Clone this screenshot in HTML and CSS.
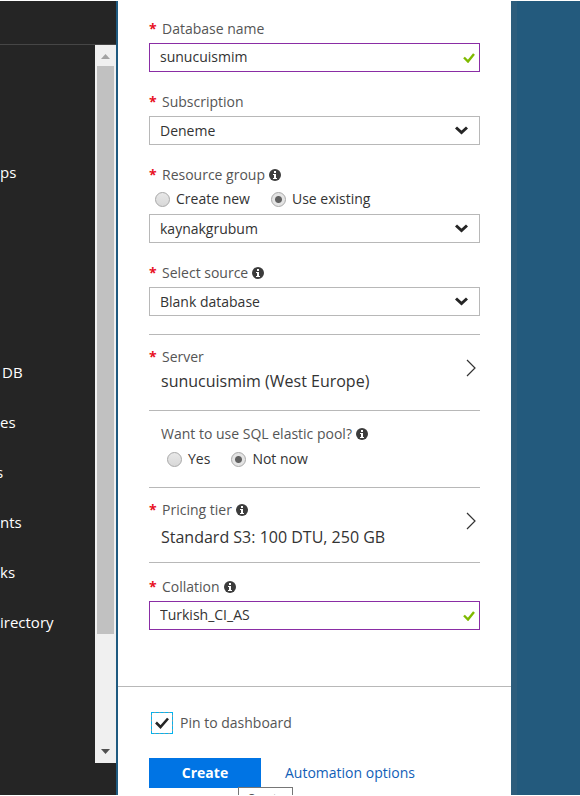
FILE: index.html
```html
<!DOCTYPE html>
<html lang="en">
<head>
    <meta charset="UTF-8">
    <meta name="viewport" content="width=device-width, initial-scale=1.0">
    <title>SQL Database</title>
    <link rel="stylesheet" href="styles.css">
</head>
<body>

<svg class="defs" width="0" height="0">
    <symbol id="info" viewBox="0 0 12 12">
        <circle cx="6" cy="6" r="6" fill="#3c3c3c"/>
        <path d="M5 2h2v2H5zM4 5h3v4h1v1H4V9h1V6H4z" fill="#fff"/>
    </symbol>
    <symbol id="valid" viewBox="0 0 12 10">
        <path d="M1 4.500l4 4 6-7.500" fill="none" stroke="#7fba00" stroke-width="2.400"/>
    </symbol>
    <symbol id="chevron" viewBox="0 0 13 9">
        <path d="M1 1.500l5.500 5 5.500-5" fill="none" stroke="#252525" stroke-width="3"/>
    </symbol>
    <symbol id="arrow" viewBox="0 0 10 18">
        <path d="M1 1l8 8-8 8" fill="none" stroke="#333" stroke-width="1.200"/>
    </symbol>
    <symbol id="tick" viewBox="0 0 14 12">
        <path d="M1 5.500l4.500 4.500L13 1.500" fill="none" stroke="#252525" stroke-width="2.600"/>
    </symbol>
</svg>

<div class="portal">
    <nav class="sidebar">
        <div class="sidebar-top"></div>
        <div class="sidebar-main">
            <ul class="menu">
                <li><a href="#">ps</a></li>
                <li class="menu-section"><a href="#" class="indent">DB</a></li>
                <li><a href="#">es</a></li>
                <li><a href="#" class="cut">s</a></li>
                <li><a href="#">nts</a></li>
                <li><a href="#">ks</a></li>
                <li><a href="#">irectory</a></li>
            </ul>
            <div class="scrollbar">
                <svg class="scroll-arrow" viewBox="0 0 21 21"><path d="M6 14l4.500-5 4.500 5z" fill="#a3a3a3"/></svg>
                <div class="track"><div class="thumb"></div></div>
                <svg class="scroll-arrow" viewBox="0 0 21 21"><path d="M6 7l4.500 5L15 7z" fill="#505050"/></svg>
            </div>
        </div>
    </nav>

    <form class="blade">
        <div class="fields">
            <div class="field">
                <label for="dbname"><span class="req">*</span>Database name</label>
                <div class="control">
                    <input type="text" id="dbname" value="sunucuismim">
                    <svg class="valid"><use href="#valid"/></svg>
                </div>
            </div>

            <div class="field">
                <label for="subscription"><span class="req">*</span>Subscription</label>
                <div class="control">
                    <select id="subscription"><option>Deneme</option></select>
                    <svg class="chevron"><use href="#chevron"/></svg>
                </div>
            </div>

            <div class="field">
                <label for="group"><span class="req">*</span>Resource group<svg class="info"><use href="#info"/></svg></label>
                <div class="radios">
                    <label><input type="radio" name="group-mode">Create new</label>
                    <label><input type="radio" name="group-mode" checked>Use existing</label>
                </div>
                <div class="control">
                    <select id="group"><option>kaynakgrubum</option></select>
                    <svg class="chevron"><use href="#chevron"/></svg>
                </div>
            </div>

            <div class="field">
                <label for="source"><span class="req">*</span>Select source<svg class="info"><use href="#info"/></svg></label>
                <div class="control">
                    <select id="source"><option>Blank database</option></select>
                    <svg class="chevron"><use href="#chevron"/></svg>
                </div>
            </div>

            <button type="button" class="picker">
                <span class="picker-label"><span class="req">*</span>Server</span>
                <span class="picker-value">sunucuismim (West Europe)</span>
                <svg class="arrow"><use href="#arrow"/></svg>
            </button>

            <div class="pool">
                <div class="pool-label">Want to use SQL elastic pool?<svg class="info"><use href="#info"/></svg></div>
                <div class="radios">
                    <label><input type="radio" name="pool">Yes</label>
                    <label><input type="radio" name="pool" checked>Not now</label>
                </div>
            </div>

            <button type="button" class="picker picker-last">
                <span class="picker-label"><span class="req">*</span>Pricing tier<svg class="info"><use href="#info"/></svg></span>
                <span class="picker-value">Standard S3: 100 DTU, 250 GB</span>
                <svg class="arrow"><use href="#arrow"/></svg>
            </button>

            <div class="field">
                <label for="collation"><span class="req">*</span>Collation<svg class="info"><use href="#info"/></svg></label>
                <div class="control">
                    <input type="text" id="collation" value="Turkish_CI_AS">
                    <svg class="valid"><use href="#valid"/></svg>
                </div>
            </div>
        </div>

        <div class="footer">
            <label class="pin">
                <span class="check"><input type="checkbox" checked><svg><use href="#tick"/></svg></span>
                Pin to dashboard
            </label>
            <div class="actions">
                <div class="create">
                    <button type="button" class="primary">Create</button>
                    <span class="tooltip">Create</span>
                </div>
                <a href="#">Automation options</a>
            </div>
        </div>
    </form>
</div>

</body>
</html>
```
FILE: styles.css
```css
* {
    box-sizing: border-box;
}
body {
    margin: 0;
    background: #fff;
    font-family: "Open Sans", "Noto Sans", sans-serif;
    font-size: 14px;
    line-height: 20px;
    color: #333;
}
input, select, button {
    font: inherit;
    color: inherit;
    margin: 0;
}
.defs {
    position: absolute;
}
.portal {
    display: grid;
    grid-template-columns: 116px 1fr 69px;
    height: 100vh;
    border-top: 1px solid #fff;
    border-bottom: 1px solid #fff;
    background: linear-gradient(to left, #235a7d 63px, #2d5d7c 63px);
    overflow: hidden;
}

/* left menu */
.sidebar {
    display: flex;
    flex-direction: column;
    background: #252525;
    padding-bottom: 32px;
    min-height: 0;
}
.sidebar-top {
    height: 44px;
    flex: none;
    border-bottom: 1px solid #464646;
}
.sidebar-main {
    flex: 1;
    display: flex;
    min-height: 0;
}
.menu {
    flex: 1;
    margin: 0;
    padding: 102px 0 0;
    list-style: none;
    overflow: hidden;
}
.menu-section {
    margin-top: 150px;
}
.menu a {
    display: block;
    font-size: 15px;
    line-height: 50px;
    color: #fff;
    text-decoration: none;
    white-space: nowrap;
}
.menu .indent {
    padding-left: 2px;
}
.menu .cut {
    margin-left: -4px;
}
.scrollbar {
    width: 21px;
    display: flex;
    flex-direction: column;
    background: #f0f0f0;
}
.scroll-arrow {
    width: 21px;
    height: 21px;
    flex: none;
}
.track {
    flex: 1;
    padding: 0 2px;
}
.thumb {
    height: 84%;
    background: #c1c1c1;
}

/* blade */
.blade {
    display: flex;
    flex-direction: column;
    background: #fff;
    border-left: 2px solid #1f5a80;
}
.fields {
    flex: 1;
    padding: 18px 31px 0;
}
.field {
    margin-bottom: 20px;
    color: #555;
}
.field > label {
    display: flex;
    align-items: center;
    margin-bottom: 4px;
}
.req {
    display: inline-block;
    width: 13px;
    flex: none;
    color: #e81123;
    font-weight: bold;
}
.info {
    width: 12px;
    height: 12px;
    margin-left: 4px;
}
.control {
    position: relative;
    color: #333;
}
.control input,
.control select {
    display: block;
    width: 100%;
    height: 29px;
    padding: 0 10px;
    background: #fff;
    border: 1px solid #b8b8b8;
    border-radius: 0;
    appearance: none;
    outline: none;
}
.control input {
    padding-bottom: 2px;
    border-color: #8a2da5;
}
.valid {
    position: absolute;
    right: 5px;
    top: 10px;
    width: 12px;
    height: 10px;
}
.chevron {
    position: absolute;
    right: 12px;
    top: 10px;
    width: 13px;
    height: 9px;
    pointer-events: none;
}
.radios {
    display: flex;
    gap: 21px;
    padding-left: 6px;
    margin-bottom: 5px;
    color: #333;
}
.radios label {
    display: flex;
    align-items: center;
    gap: 6px;
}
.radios input {
    appearance: none;
    width: 15px;
    height: 15px;
    border: 1px solid #a8a8a8;
    border-radius: 50%;
    background: linear-gradient(#e8e8e8, #d8d8d8);
}
.radios input:checked {
    background: radial-gradient(circle, #606060 3px, #e4e4e4 4px);
}

/* rows that open another blade */
.picker {
    display: grid;
    grid-template-columns: 1fr auto;
    align-content: start;
    width: 100%;
    height: 77px;
    padding: 12px 4px 0 0;
    margin-top: -2px;
    background: none;
    border: 0;
    border-top: 1px solid #b8b8b8;
    border-bottom: 1px solid #b8b8b8;
    text-align: left;
}
.picker-label {
    display: flex;
    align-items: center;
    color: #555;
}
.picker-value {
    grid-row: 2;
    padding-left: 12px;
    font-size: 16px;
    line-height: 28px;
}
.arrow {
    grid-row: 1 / 3;
    grid-column: 2;
    width: 10px;
    height: 18px;
    margin-top: 12px;
}
.pool {
    padding: 13px 0 18px 12px;
}
.pool-label {
    display: flex;
    align-items: center;
    margin-bottom: 5px;
    color: #555;
}
.pool .radios {
    margin-bottom: 0;
}
.picker-last {
    row-gap: 3px;
    height: 76px;
    margin: 0 0 14px;
}

.footer {
    padding: 25px 31px 7px;
    border-top: 1px solid #b8b8b8;
}
.pin {
    display: flex;
    align-items: center;
    gap: 7px;
    padding-left: 2px;
    color: #555;
}
.check {
    position: relative;
    width: 22px;
    height: 22px;
}
.check input {
    display: block;
    appearance: none;
    width: 22px;
    height: 22px;
    border: 1px solid #7d9aa5;
    outline: 1px dashed #00b4f0;
    outline-offset: -1px;
}
.check svg {
    position: absolute;
    left: 4px;
    top: 5px;
    width: 14px;
    height: 12px;
    pointer-events: none;
}
.actions {
    display: flex;
    align-items: center;
    gap: 24px;
    margin-top: 24px;
}
.actions a {
    color: #1160b7;
    text-decoration: none;
}
.create {
    position: relative;
}
.primary {
    display: block;
    width: 112px;
    height: 30px;
    background: #0074e4;
    border: 0;
    color: #fff;
    font-weight: bold;
}
.tooltip {
    position: absolute;
    left: 89px;
    top: 29px;
    padding: 1px 8px;
    background: #fff;
    border: 1px solid #767676;
    font-size: 12px;
    color: #555;
}
```
